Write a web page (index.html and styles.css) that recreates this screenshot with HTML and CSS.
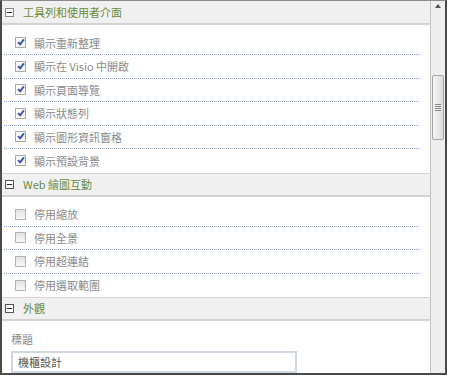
FILE: index.html
```html
<!DOCTYPE html>
<html lang="zh-Hant">
<head>
    <meta charset="UTF-8">
    <title>網頁組件屬性</title>
    <link rel="stylesheet" href="styles.css">
</head>
<body>
    <div class="frame">
        <div class="pane">
            <div class="sec-hd">
                <span class="toggle light"></span>
                <span class="sec-title">工具列和使用者介面</span>
            </div>
            <ul class="opts">
                <li><span class="cb on"></span>顯示重新整理</li>
                <li><span class="cb on"></span>顯示在 Visio 中開啟</li>
                <li><span class="cb on"></span>顯示頁面導覽</li>
                <li><span class="cb on"></span>顯示狀態列</li>
                <li><span class="cb on"></span>顯示圖形資訊窗格</li>
                <li><span class="cb on"></span>顯示預設背景</li>
            </ul>

            <div class="sec-hd">
                <span class="toggle"></span>
                <span class="sec-title">Web 繪圖互動</span>
            </div>
            <ul class="opts">
                <li><span class="cb"></span>停用縮放</li>
                <li><span class="cb"></span>停用全景</li>
                <li><span class="cb"></span>停用超連結</li>
                <li><span class="cb"></span>停用選取範圍</li>
            </ul>

            <div class="sec-hd">
                <span class="toggle"></span>
                <span class="sec-title">外觀</span>
            </div>
            <div class="field">
                <p class="field-lbl">標題</p>
                <div class="field-box">機櫃設計</div>
            </div>
        </div>
        <div class="vscroll">
            <span class="arrow-up"></span>
            <div class="thumb"><span class="grip"></span></div>
        </div>
    </div>
</body>
</html>
```

FILE: styles.css
```css
body,p,ul { margin: 0; padding: 0;}
li { list-style: none;}
body {
    background: #fff;
    font-family: "Noto Sans CJK TC", "Liberation Sans", sans-serif;
    font-size: 11px;
}
.frame {
    display: flex;
    width: 447px;
    height: 375px;
    box-sizing: border-box;
    border: 2px solid #4a4a4a;
    border-top: 1px solid #8c8c8c;
    overflow: hidden;
}
.pane {
    flex: 1;
    overflow: hidden;
}
.sec-hd {
    display: flex;
    align-items: center;
    height: 21px;
    padding-left: 3px;
    background-color: #f0f0f0;
    border-top: 1px solid #d6d6d6;
    border-bottom: 2px solid #d2d2d2;
}
.pane .sec-hd:first-child {
    border-top: 0;
    height: 22px;
}
.toggle {
    position: relative;
    width: 7px;
    height: 7px;
    margin-right: 9px;
    border: 1px solid #555;
    background: #fff;
}
.toggle:after {
    content: '';
    position: absolute;
    left: 1px;
    top: 3px;
    width: 5px;
    height: 1px;
    background: #222;
}
.toggle.light { border-color: #8a8a8a;}
.sec-title {
    color: #6a8c3c;
    line-height: 1;
}
.opts {
    padding-top: 6.5px;
    margin: 0 11px 0 2px;
}
.opts li {
    display: flex;
    align-items: center;
    height: 22.5px;
    padding-left: 11px;
    color: #8a8a8a;
    border-bottom: 1px dotted #8aa0d0;
}
.opts li:last-child {
    height: 23.5px;
    border-bottom: 0;
}
.cb {
    position: relative;
    width: 9px;
    height: 9px;
    margin-right: 8px;
    border: 1px solid #b4b4b4;
    background: linear-gradient(#e2e2e2, #f8f8f8);
}
.cb.on {
    background: #fbfbfb;
    border-color: #a8a8a8;
}
.cb.on:after {
    content: '';
    position: absolute;
    left: 3px;
    top: 0;
    width: 2px;
    height: 5px;
    border: solid #3a5cae;
    border-width: 0 2px 2px 0;
    transform: rotate(38deg);
}
.field {
    padding: 10px 0 0 9px;
}
.field-lbl {
    height: 16px;
    line-height: 16px;
    color: #8a8a8a;
    margin-bottom: 4px;
}
.field-box {
    width: 277px;
    height: 18px;
    line-height: 18px;
    padding-left: 5px;
    color: #555;
    border: 2px solid #cdd8e2;
}
.vscroll {
    position: relative;
    width: 14px;
    border-left: 1px solid #c4c4c4;
    background-color: #eeeeee;
}
.arrow-up {
    position: absolute;
    left: 4px;
    top: 3px;
    border: 3px solid transparent;
    border-bottom: 4px solid #555;
    border-top: 0;
}
.thumb {
    position: absolute;
    left: 1px;
    top: 74px;
    width: 10px;
    height: 63px;
    border: 1px solid #a5a5a5;
    border-radius: 2px;
    background: linear-gradient(to right, #f6f6f6, #dcdcdc);
}
.grip {
    position: absolute;
    left: 2px;
    top: 28px;
    width: 6px;
    height: 7px;
    background: repeating-linear-gradient(#8a8a8a 0, #8a8a8a 1px, transparent 1px, transparent 2px);
}
```
